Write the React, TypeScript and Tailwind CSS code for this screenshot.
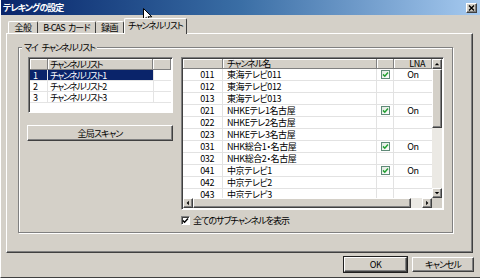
import React from 'react';

const raised =
  'border border-t-white border-l-white border-r-[#404040] border-b-[#404040] shadow-[inset_-1px_-1px_0_#808080]';
const sunken =
  'border border-t-[#808080] border-l-[#808080] border-r-white border-b-white shadow-[inset_1px_1px_0_#404040]';
const headCell =
  'h-full border-r border-b border-r-[#808080] border-b-[#808080] shadow-[inset_1px_1px_0_white] bg-[#d4d0c8] flex items-center';

type Channel = { no: string; name: string; lna?: boolean };

const channels: Channel[] = [
  { no: '011', name: '東海テレビ011', lna: true },
  { no: '012', name: '東海テレビ012' },
  { no: '013', name: '東海テレビ013' },
  { no: '021', name: 'NHKEテレ1名古屋', lna: true },
  { no: '022', name: 'NHKEテレ2名古屋' },
  { no: '023', name: 'NHKEテレ3名古屋' },
  { no: '031', name: 'NHK総合1・名古屋', lna: true },
  { no: '032', name: 'NHK総合2・名古屋' },
  { no: '041', name: '中京テレビ1', lna: true },
  { no: '042', name: '中京テレビ2' },
  { no: '043', name: '中京テレビ3' },
];

const lists = ['チャンネルリスト1', 'チャンネルリスト2', 'チャンネルリスト3'];

function ScrollArrow({ dir }: { dir: 'up' | 'down' | 'left' | 'right' }) {
  const pts = {
    up: '2,6 7,6 4.5,3.5',
    down: '2,3.5 7,3.5 4.5,6',
    left: '5.5,2 5.5,7 3,4.5',
    right: '3.5,2 3.5,7 6,4.5',
  }[dir];
  return (
    <div className={`w-[10px] h-[10px] bg-[#d4d0c8] ${raised} flex items-center justify-center shrink-0`}>
      <svg width="8" height="8" viewBox="0 0 9 9">
        <polygon points={pts} fill="#000" />
      </svg>
    </div>
  );
}

function LnaCheck() {
  return (
    <span className="w-[9px] h-[9px] border border-[#5f8a78] bg-gradient-to-br from-[#dfe9df] to-white flex items-center justify-center">
      <svg width="7" height="7" viewBox="0 0 7 7">
        <path d="M1 3.4 L2.8 5.2 L6 1.6" stroke="#22a032" strokeWidth="1.5" fill="none" />
      </svg>
    </span>
  );
}

function Button({ label, primary }: { label: string; primary?: boolean }) {
  return (
    <div
      className={`h-[15px] flex items-center justify-center bg-[#d4d0c8] ${raised} ${
        primary ? 'outline outline-1 outline-[#202020]' : ''
      }`}
    >
      {label}
    </div>
  );
}

export default function App() {
  return (
    <div className="relative w-[480px] h-[278px] bg-[#d4d0c8] flex flex-col overflow-hidden border-l border-l-white border-b border-b-[#404040] font-['Noto_Sans_CJK_JP',sans-serif] [font-feature-settings:'palt'] text-[9px] tracking-[-0.4px] text-black leading-none whitespace-nowrap">
      {/* title bar */}
      <div className="h-[15px] shrink-0 bg-gradient-to-r from-[#0a246a] via-[#3a6ea5] to-[#a6caf0] flex items-center justify-between pl-[2px] pr-[3px]">
        <span className="text-white font-bold tracking-[-1px]">テレキングの設定</span>
        <div className={`w-[11px] h-[10px] bg-[#d4d0c8] ${raised} flex items-center justify-center`}>
          <svg width="7" height="6" viewBox="0 0 7 6">
            <path d="M1 0.5 L6 5.5 M6 0.5 L1 5.5" stroke="#000" strokeWidth="1.4" />
          </svg>
        </div>
      </div>

      {/* tabs */}
      <div className="h-[18px] shrink-0 flex items-end pl-[7px]">
        <div className="w-[30px] h-[12px] border-t border-l border-r border-t-white border-l-white border-r-[#404040] rounded-t-[2px] flex items-center justify-center">
          全般
        </div>
        <div className="w-[58px] h-[12px] border-t border-r border-t-white border-r-[#404040] rounded-t-[2px] flex items-center justify-center tracking-[-0.8px]">
          <span>B-CAS</span>
          <span className="ml-[3px]">カード</span>
        </div>
        <div className="w-[28px] h-[12px] border-t border-r border-t-white border-r-[#404040] rounded-t-[2px] flex items-center justify-center">
          録画
        </div>
        <div className="relative z-10 -mb-px w-[63px] h-[16px] bg-[#d4d0c8] border-t border-l border-r border-t-white border-l-white border-r-[#404040] rounded-t-[2px] flex items-center justify-center pb-[3px] tracking-[-1px]">
          チャンネルリスト
        </div>
      </div>

      {/* tab page */}
      <div className="ml-[5px] w-[467px] h-[220px] shrink-0 border border-t-white border-l-white border-r-[#404040] border-b-[#404040] shadow-[inset_-1px_-1px_0_#808080] pl-[11px] pt-[13px]">
        {/* group box */}
        <div className="relative w-[435px] h-[186px] border border-[#808080] shadow-[inset_1px_1px_0_white,1px_1px_0_white] flex gap-[8px] pl-[9px] pt-[9px]">
          <span className="absolute left-[3px] -top-[5px] bg-[#d4d0c8] px-[2px] tracking-[-1.2px] flex">
            <span>マイ</span>
            <span className="ml-[4px]">チャンネルリスト</span>
          </span>

          {/* left: list + button */}
          <div className="w-[145px] flex flex-col gap-[12px]">
            <div className={`h-[56px] bg-white ${sunken} p-px flex flex-col`}>
              <div className="h-[11px] flex shrink-0">
                <div className={`${headCell} w-[18px]`} />
                <div className={`${headCell} w-[105px] pl-[2px] tracking-[-1.3px]`}>チャンネルリスト</div>
                <div className={`${headCell} flex-1`} />
              </div>
              {lists.map((l, i) => (
                <div key={l} className="h-[11px] flex shrink-0 border-b border-b-[#e4e4e4]">
                  <div className={`w-[123px] flex items-center ${i === 0 ? 'bg-[#0a246a] text-white' : ''}`}>
                    <span className="w-[18px] pl-[3px] border-r border-r-[#e4e4e4] h-full flex items-center">{i + 1}</span>
                    <span className="pl-[2px] tracking-[-1.3px]">{l}</span>
                  </div>
                  <div className="flex-1 border-l border-l-[#e4e4e4]" />
                </div>
              ))}
            </div>
            <div className="w-[146px] -ml-px h-[16px]">
              <div className={`h-full flex items-center justify-center bg-[#d4d0c8] ${raised} tracking-[-0.8px]`}>全局スキャン</div>
            </div>
          </div>

          {/* right: channel grid */}
          <div className="w-[263px] flex flex-col">
            <div className={`h-[153px] bg-white ${sunken} p-px flex flex-col`}>
              <div className="flex h-[139px]">
                <div className="w-[249px] flex flex-col">
                  <div className="h-[10px] flex shrink-0">
                    <div className={`${headCell} w-[40px]`} />
                    <div className={`${headCell} w-[154px] pl-[4px] tracking-[-1px]`}>チャンネル名</div>
                    <div className={`${headCell} w-[17px]`} />
                    <div className={`${headCell} w-[38px] justify-end pr-[6px]`}>LNA</div>
                  </div>
                  <div className="h-[129px] overflow-hidden">
                    {channels.map((c) => (
                      <div key={c.no} className="h-[12px] flex border-b border-b-[#e2e2e2]">
                        <div className="w-[40px] border-r border-r-[#e2e2e2] flex items-center justify-end pr-[8px]">{c.no}</div>
                        <div className="w-[154px] border-r border-r-[#e2e2e2] flex items-center pl-[4px]">{c.name}</div>
                        <div className="w-[17px] border-r border-r-[#e2e2e2] flex items-center justify-center">
                          {c.lna && <LnaCheck />}
                        </div>
                        <div className="w-[38px] flex items-center justify-center">{c.lna ? 'On' : ''}</div>
                      </div>
                    ))}
                  </div>
                </div>
                {/* vertical scrollbar */}
                <div className="w-[10px] flex flex-col bg-[#ebe9e4]">
                  <ScrollArrow dir="up" />
                  <div className={`h-[59px] bg-[#d4d0c8] ${raised}`} />
                  <div className="flex-1" />
                  <ScrollArrow dir="down" />
                </div>
              </div>
              {/* horizontal scrollbar */}
              <div className="flex h-[10px]">
                <div className="w-[249px] flex bg-[#ebe9e4]">
                  <ScrollArrow dir="left" />
                  <div className={`w-[218px] bg-[#d4d0c8] ${raised}`} />
                  <div className="flex-1" />
                  <ScrollArrow dir="right" />
                </div>
                <div className="w-[10px] bg-[#d4d0c8]" />
              </div>
            </div>
            <div className="flex items-center gap-[3px] mt-[5px] h-[11px]">
              <span className={`w-[9px] h-[9px] bg-white ${sunken} flex items-center justify-center`}>
                <svg width="7" height="7" viewBox="0 0 7 7">
                  <path d="M0.8 3.4 L2.6 5.2 L6 1.6" stroke="#000" strokeWidth="1.4" fill="none" />
                </svg>
              </span>
              <span className="tracking-[-1px]">全てのサブチャンネルを表示</span>
            </div>
          </div>
        </div>
      </div>

      {/* footer */}
      <div className="flex-1 flex items-start justify-end gap-[5px] pt-[4px] pr-[6px]">
        <div className="w-[63px]">
          <Button label="OK" primary />
        </div>
        <div className="w-[62px]">
          <div className="tracking-[-1px]">
            <Button label="キャンセル" />
          </div>
        </div>
      </div>

      {/* mouse pointer */}
      <svg className="absolute left-[142px] top-[8px]" width="10" height="16" viewBox="0 0 10 16">
        <path d="M0.5 0.5 L0.5 12 L3.3 9.4 L5.3 14.2 L7 13.4 L5 8.8 L8.8 8.8 Z" fill="#fff" stroke="#000" strokeWidth="1" />
      </svg>
    </div>
  );
}
